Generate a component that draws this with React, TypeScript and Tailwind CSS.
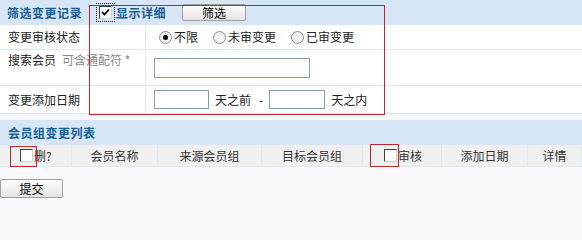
import React, { useState } from 'react';

const cols = [
  { label: '会员名称', w: 'w-[86px]' },
  { label: '来源会员组', w: 'w-[104px]' },
  { label: '目标会员组', w: 'w-[101px]' },
];

const cols2 = [
  { label: '添加日期', w: 'w-[86px]' },
  { label: '详情', w: 'flex-1' },
];

function Box({ checked }: { checked?: boolean }) {
  return (
    <span className="inline-flex w-[13px] h-[13px] border border-t-[#404040] border-l-[#404040] border-r-[#d4d0c8] border-b-[#d4d0c8] bg-white items-center justify-center">
      {checked && (
        <svg width="9" height="9" viewBox="0 0 9 9">
          <path d="M1 4 L3.5 6.5 L8 1.5" stroke="#000" strokeWidth="1.8" fill="none" />
        </svg>
      )}
    </span>
  );
}

function Radio({ on }: { on?: boolean }) {
  return (
    <span className="inline-flex w-[13px] h-[13px] rounded-full border border-[#8a8a8a] bg-gradient-to-br from-[#e6e6e6] to-white items-center justify-center">
      {on && <span className="w-[5px] h-[5px] rounded-full bg-black" />}
    </span>
  );
}

export default function App() {
  const [status, setStatus] = useState('all');

  return (
    <div
      className="relative w-[582px] h-[240px] bg-[#f9f9fe] text-[12px] text-[#222]"
      style={{ fontFamily: '"Noto Sans CJK SC", "Noto Sans", sans-serif' }}
    >
      {/* 筛选区 */}
      <div className="h-[25px] bg-[#d6e6f6] flex items-center pl-[7px]">
        <span className="font-bold text-[#1b5c8e] tracking-[0.5px]">筛选变更记录</span>
        <span className="ml-[14px] inline-flex items-center border border-dotted border-black p-[2px]">
          <Box checked />
        </span>
        <span className="font-bold text-[#1b5c8e] ml-[1px] tracking-[0.5px]">显示详细</span>
        <button className="ml-[16px] w-[64px] h-[17px] leading-[15px] border border-[#a0a0a0] rounded-[2px] bg-gradient-to-b from-white to-[#e4e4e4] text-black">
          筛选
        </button>
      </div>

      <div className="bg-white">
        <div className="flex h-[25px] border-b border-[#dce8f3]">
          <div className="w-[146px] border-r border-[#dce8f3] flex items-center pl-[8px]">变更审核状态</div>
          <div className="flex items-center pl-[13px] gap-[15px]">
            {[
              ['all', '不限'],
              ['no', '未审变更'],
              ['yes', '已审变更'],
            ].map(([k, t]) => (
              <label key={k} className="flex items-center gap-[2px]" onClick={() => setStatus(k)}>
                <Radio on={status === k} />
                {t}
              </label>
            ))}
          </div>
        </div>

        <div className="flex h-[36px] border-b border-[#dce8f3]">
          <div className="w-[146px] border-r border-[#dce8f3] flex items-start pt-[1px] pl-[8px]">
            搜索会员<span className="ml-[6px] text-[#888]">可含通配符 *</span>
          </div>
          <div className="flex items-center pl-[8px]">
            <input className="w-[156px] h-[20px] border border-[#7f9db9] outline-none" />
          </div>
        </div>

        <div className="flex h-[28px] border-b border-[#dce8f3]">
          <div className="w-[146px] border-r border-[#dce8f3] flex items-center pl-[8px]">变更添加日期</div>
          <div className="flex items-center pl-[8px]">
            <input className="w-[55px] h-[19px] border border-[#7f9db9] outline-none" />
            <span className="ml-[6px]">天之前</span>
            <span className="ml-[8px]">-</span>
            <input className="ml-[6px] w-[56px] h-[19px] border border-[#7f9db9] outline-none" />
            <span className="ml-[6px]">天之内</span>
          </div>
        </div>
      </div>

      {/* 列表 */}
      <div className="mt-[6px] h-[25px] bg-[#d6e6f6] flex items-center pl-[8px]">
        <span className="font-bold text-[#1b5c8e] tracking-[0.5px]">会员组变更列表</span>
      </div>
      <div className="flex h-[22px] bg-[#f0f0f0] border-b border-[#dce8f3] text-[#333]">
        <div className="w-[72px] flex items-center pl-[20px] border-r border-[#dce8f3]">
          <Box />
          <span className="ml-[1px]">删?</span>
        </div>
        {cols.map((c) => (
          <div key={c.label} className={`${c.w} flex items-center justify-center border-r border-[#dce8f3]`}>
            {c.label}
          </div>
        ))}
        <div className="w-[79px] flex items-center pl-[21px] border-r border-[#dce8f3]">
          <Box />
          <span className="ml-[1px]">审核</span>
        </div>
        {cols2.map((c) => (
          <div key={c.label} className={`${c.w} flex items-center justify-center border-r border-[#dce8f3]`}>
            {c.label}
          </div>
        ))}
      </div>

      <div className="pt-[12px]">
        <button className="w-[63px] h-[19px] leading-[17px] border border-[#a0a0a0] rounded-[2px] bg-gradient-to-b from-white to-[#e4e4e4] text-black">
          提交
        </button>
      </div>

      {/* 标注框 */}
      <div className="absolute left-[89px] top-[5px] w-[296px] h-[110px] border border-[#c0262c] pointer-events-none" />
      <div className="absolute left-[10px] top-[146px] w-[27px] h-[21px] border border-[#c0262c] pointer-events-none" />
      <div className="absolute left-[370px] top-[144px] w-[29px] h-[23px] border border-[#c0262c] pointer-events-none" />
    </div>
  );
}
